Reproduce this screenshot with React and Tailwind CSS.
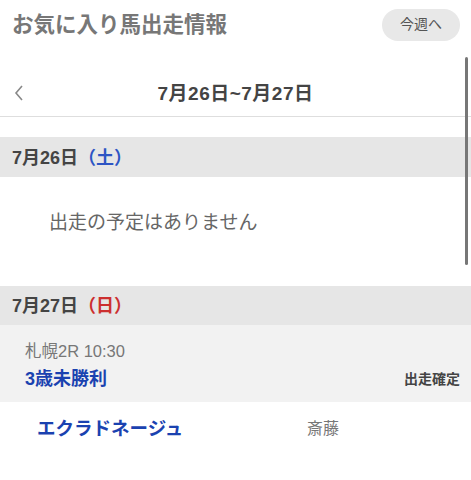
export default function App() {
  return (
    <div
      className="relative w-[471px] h-[480px] overflow-hidden bg-white"
      style={{ fontFamily: '"Liberation Sans", "Noto Sans CJK JP", sans-serif' }}
    >
      {/* HEADER */}
      <div className="flex items-center justify-between h-[50px] pl-[12px] pr-[11px]">
        <h1 className="text-[21.5px] font-bold text-[#777]">お気に入り馬出走情報</h1>
        <button className="w-[78px] h-[32px] rounded-full bg-[#e8e8e8] text-[14px] text-[#555] mt-[-1px]">
          今週へ
        </button>
      </div>

      {/* WEEK NAV */}
      <div className="relative flex items-center justify-center h-[67px] pt-[23px] border-b border-[#dedede]">
        <svg className="absolute left-[13px] top-[34px]" width="12" height="18" viewBox="0 0 12 18">
          <path d="M9 2 L3 9 L9 16" fill="none" stroke="#888" strokeWidth="1.6" />
        </svg>
        <span className="text-[19px] font-bold text-[#444] tracking-[0.5px]">7月26日~7月27日</span>
      </div>

      <div className="h-[20px]" />

      {/* DAY 1 */}
      <div className="flex items-center h-[40px] px-[12px] pt-[2px] bg-[#e6e6e6]">
        <span className="text-[18px] font-bold text-[#444]">7月26日</span>
        <span className="text-[18px] font-bold text-[#2d55c4]">（土）</span>
      </div>
      <div className="h-[109px] pl-[49px] pt-[32px]">
        <p className="text-[19px] text-[#666]">出走の予定はありません</p>
      </div>

      {/* DAY 2 */}
      <div className="flex items-center h-[39px] px-[12px] pt-[2px] bg-[#e6e6e6]">
        <span className="text-[18px] font-bold text-[#444]">7月27日</span>
        <span className="text-[18px] font-bold text-[#cc2f2f]">（日）</span>
      </div>
      <div className="h-[77px] bg-[#f2f2f2] pl-[25px] pr-[11px] pt-[14px]">
        <p className="text-[16.5px] leading-[24px] text-[#777]">札幌2R 10:30</p>
        <div className="flex items-center justify-between mt-[4px]">
          <span className="text-[18px] leading-[24px] font-bold text-[#1a42b0]">3歳未勝利</span>
          <span className="text-[14px] font-bold text-[#444]">出走確定</span>
        </div>
      </div>
      <div className="flex items-center h-[50px] pl-[37px] pt-[4px]">
        <span className="w-[270px] text-[18.5px] font-bold text-[#1a42b0]">エクラドネージュ</span>
        <span className="text-[16px] text-[#777]">斎藤</span>
      </div>

      {/* SCROLLBAR */}
      <div className="absolute right-[3px] top-[57px] w-[3px] h-[208px] rounded-full bg-[#777]" />
    </div>
  );
}
